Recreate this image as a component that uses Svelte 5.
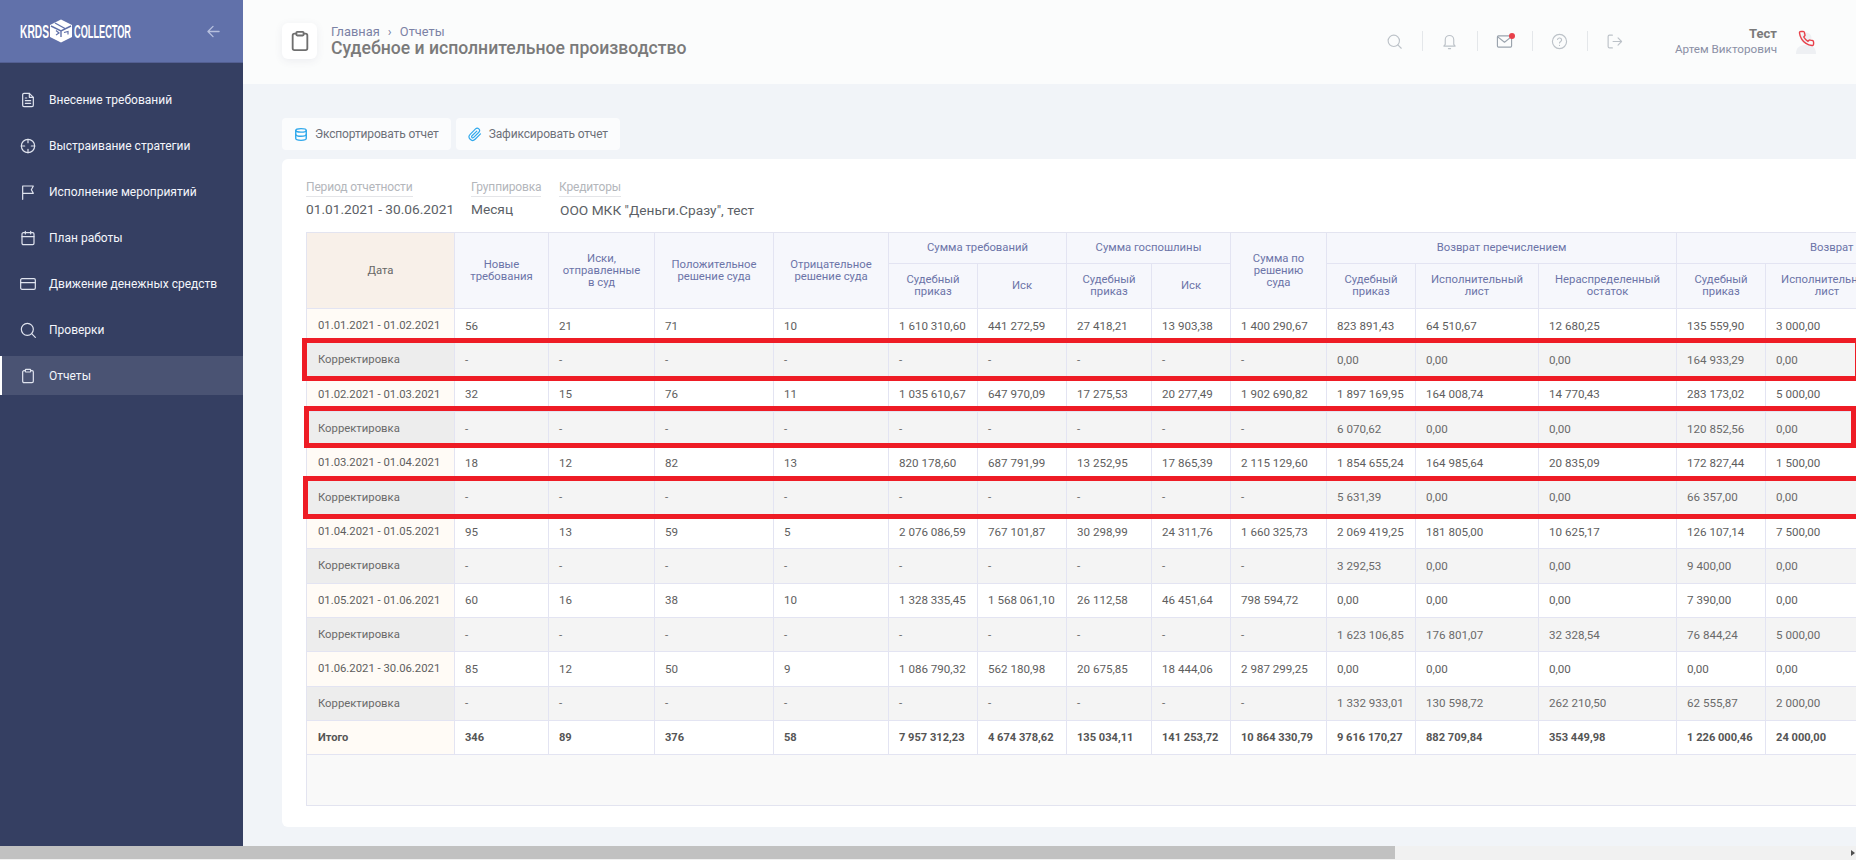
<script lang="ts">
  const nav = [
    { label: 'Внесение требований', icon: 'doc' },
    { label: 'Выстраивание стратегии', icon: 'target' },
    { label: 'Исполнение мероприятий', icon: 'flag' },
    { label: 'План работы', icon: 'calendar' },
    { label: 'Движение денежных средств', icon: 'card' },
    { label: 'Проверки', icon: 'search' },
    { label: 'Отчеты', icon: 'clipboard', active: true }
  ];

  const dash = ['-', '-', '-', '-', '-', '-', '-', '-', '-'];

  const rows = [
    { date: '01.01.2021 - 01.02.2021', cells: ['56', '21', '71', '10', '1 610 310,60', '441 272,59', '27 418,21', '13 903,38', '1 400 290,67', '823 891,43', '64 510,67', '12 680,25', '135 559,90', '3 000,00'] },
    { fix: true, date: 'Корректировка', cells: [...dash, '0,00', '0,00', '0,00', '164 933,29', '0,00'] },
    { date: '01.02.2021 - 01.03.2021', cells: ['32', '15', '76', '11', '1 035 610,67', '647 970,09', '17 275,53', '20 277,49', '1 902 690,82', '1 897 169,95', '164 008,74', '14 770,43', '283 173,02', '5 000,00'] },
    { fix: true, date: 'Корректировка', cells: [...dash, '6 070,62', '0,00', '0,00', '120 852,56', '0,00'] },
    { date: '01.03.2021 - 01.04.2021', cells: ['18', '12', '82', '13', '820 178,60', '687 791,99', '13 252,95', '17 865,39', '2 115 129,60', '1 854 655,24', '164 985,64', '20 835,09', '172 827,44', '1 500,00'] },
    { fix: true, date: 'Корректировка', cells: [...dash, '5 631,39', '0,00', '0,00', '66 357,00', '0,00'] },
    { date: '01.04.2021 - 01.05.2021', cells: ['95', '13', '59', '5', '2 076 086,59', '767 101,87', '30 298,99', '24 311,76', '1 660 325,73', '2 069 419,25', '181 805,00', '10 625,17', '126 107,14', '7 500,00'] },
    { fix: true, date: 'Корректировка', cells: [...dash, '3 292,53', '0,00', '0,00', '9 400,00', '0,00'] },
    { date: '01.05.2021 - 01.06.2021', cells: ['60', '16', '38', '10', '1 328 335,45', '1 568 061,10', '26 112,58', '46 451,64', '798 594,72', '0,00', '0,00', '0,00', '7 390,00', '0,00'] },
    { fix: true, date: 'Корректировка', cells: [...dash, '1 623 106,85', '176 801,07', '32 328,54', '76 844,24', '5 000,00'] },
    { date: '01.06.2021 - 30.06.2021', cells: ['85', '12', '50', '9', '1 086 790,32', '562 180,98', '20 675,85', '18 444,06', '2 987 299,25', '0,00', '0,00', '0,00', '0,00', '0,00'] },
    { fix: true, date: 'Корректировка', cells: [...dash, '1 332 933,01', '130 598,72', '262 210,50', '62 555,87', '2 000,00'] },
    { total: true, date: 'Итого', cells: ['346', '89', '376', '58', '7 957 312,23', '4 674 378,62', '135 034,11', '141 253,72', '10 864 330,79', '9 616 170,27', '882 709,84', '353 449,98', '1 226 000,46', '24 000,00'] }
  ];

  const widths = [148, 94, 106, 119, 115, 89, 89, 85, 79, 96, 89, 123, 138, 89, 123];
</script>

{#snippet navIcon(name)}
  <svg class="nav-icon" viewBox="0 0 24 24" fill="none" stroke="currentColor" stroke-width="1.8" stroke-linecap="round" stroke-linejoin="round">
    {#if name === 'doc'}
      <path d="M14 2H6a2 2 0 0 0-2 2v16a2 2 0 0 0 2 2h12a2 2 0 0 0 2-2V8z" /><path d="M14 2v6h6" /><path d="M8 13h8M8 17h8M8 9h2" />
    {:else if name === 'target'}
      <circle cx="12" cy="12" r="10" /><path d="M12 2v5M12 17v5M2 12h5M17 12h5" />
    {:else if name === 'flag'}
      <path d="M4 23V3h16l-3 5.500 3 5.500H4" />
    {:else if name === 'calendar'}
      <rect x="3" y="4" width="18" height="18" rx="2" /><path d="M16 2v4M8 2v4M3 10h18" />
    {:else if name === 'card'}
      <rect x="1" y="4" width="22" height="16" rx="2" /><path d="M1 10h22" />
    {:else if name === 'search'}
      <circle cx="11" cy="11" r="9" /><path d="M23 23l-5.500-5.500" />
    {:else}
      <path d="M16 4h2a2 2 0 0 1 2 2v14a2 2 0 0 1-2 2H6a2 2 0 0 1-2-2V6a2 2 0 0 1 2-2h2" /><rect x="8" y="2" width="8" height="4" rx="1" />
    {/if}
  </svg>
{/snippet}

<div class="app">
  <div class="shell">
    <aside class="sidebar">
      <div class="brand">
        <svg class="logo" viewBox="0 0 112 24" aria-label="KRDS COLLECTOR">
          <text x="0" y="18.5" textLength="29" lengthAdjust="spacingAndGlyphs">KRDS</text>
          <path d="M41 .5l11 5.500v12l-11 5.500-11-5.500V6z" fill="#fff" />
          <path d="M31 7l10 5 10-5M41 12v6M35 4l10 5.500" fill="none" stroke="#6171aa" stroke-width="1.400" />
          <path d="M36 11.500l3 2.500-3 2M44 13.500l4-1v3" fill="none" stroke="#6171aa" stroke-width="1.200" />
          <text x="54" y="18.5" textLength="57" lengthAdjust="spacingAndGlyphs">COLLECTOR</text>
        </svg>
        <svg class="collapse" viewBox="0 0 14 14" fill="none" stroke="currentColor" stroke-width="1.400" stroke-linecap="round" stroke-linejoin="round">
          <path d="M13 7H1.500M6.500 1.500L1 7l5.500 5.500" />
        </svg>
      </div>
      <nav class="nav">
        {#each nav as item}
          <div class="nav-item" class:active={item.active}>
            {@render navIcon(item.icon)}
            <span>{item.label}</span>
          </div>
        {/each}
      </nav>
    </aside>

    <div class="content">
      <header class="topbar">
        <div class="page-icon">
          <svg viewBox="0 0 24 24" fill="none" stroke="#6f6f6f" stroke-width="2" stroke-linecap="round" stroke-linejoin="round">
            <path d="M16 4h2a2 2 0 0 1 2 2v14a2 2 0 0 1-2 2H6a2 2 0 0 1-2-2V6a2 2 0 0 1 2-2h2" /><rect x="8" y="2" width="8" height="4" rx="1" />
          </svg>
        </div>
        <div class="titles">
          <div class="crumbs">Главная <i>›</i> Отчеты</div>
          <h1>Судебное и исполнительное производство</h1>
        </div>
        <div class="tools">
          <button class="tool" aria-label="Поиск">
            <svg viewBox="0 0 24 24"><circle cx="11" cy="11" r="8" /><path d="M21.500 21.500l-4.800-4.800" /></svg>
          </button>
          <button class="tool" aria-label="Уведомления">
            <svg viewBox="0 0 24 24"><path d="M18 16V9.500a6 6 0 0 0-12 0V16l-2 2.500h16z" /><path d="M10.500 22h3" /></svg>
          </button>
          <button class="tool mail" aria-label="Почта">
            <svg viewBox="0 0 24 24"><rect x="2" y="4" width="20" height="16" rx="1.500" /><path d="M2.500 5.500L12 13l9.500-7.500" /></svg>
            <span class="dot"></span>
          </button>
          <button class="tool" aria-label="Помощь">
            <svg viewBox="0 0 24 24"><circle cx="12" cy="12" r="10" /><path d="M9.200 9a3 3 0 0 1 5.800 1c0 2-3 2.500-3 4" /><path d="M12 17.500v.2" /></svg>
          </button>
          <button class="tool" aria-label="Выход">
            <svg viewBox="0 0 24 24"><path d="M9 21H5a2 2 0 0 1-2-2V5a2 2 0 0 1 2-2h4" /><path d="M10 12h12M17 7l5 5-5 5" /></svg>
          </button>
        </div>
        <div class="user">
          <strong>Тест</strong>
          <span>Артем Викторович</span>
        </div>
        <div class="avatar">
          <svg class="ghost" viewBox="0 0 20 22" fill="#eef0f3"><circle cx="10" cy="6" r="5.500" /><path d="M0 22c0-7 4-9 10-9s10 2 10 9z" /></svg>
          <svg class="phone" viewBox="0 0 24 24" fill="none" stroke="#e8404a" stroke-width="2" stroke-linecap="round" stroke-linejoin="round">
            <path d="M22 16.900v3a2 2 0 0 1-2.200 2 19.800 19.800 0 0 1-8.600-3.100 19.500 19.500 0 0 1-6-6 19.800 19.800 0 0 1-3.100-8.700A2 2 0 0 1 4.100 2h3a2 2 0 0 1 2 1.700c.1 1 .4 1.900.7 2.800a2 2 0 0 1-.5 2.100L8.100 9.900a16 16 0 0 0 6 6l1.300-1.300a2 2 0 0 1 2.100-.4c.9.300 1.800.6 2.800.7a2 2 0 0 1 1.700 2z" />
          </svg>
        </div>
      </header>

      <main class="page">
        <div class="actions">
          <button class="action">
            <svg viewBox="0 0 24 24" fill="none" stroke="#2fa8ec" stroke-width="2.400" stroke-linecap="round" stroke-linejoin="round">
              <ellipse cx="12" cy="5" rx="9" ry="3" /><path d="M21 12c0 1.700-4 3-9 3s-9-1.300-9-3" /><path d="M3 5v14c0 1.700 4 3 9 3s9-1.300 9-3V5" />
            </svg>
            Экспортировать отчет
          </button>
          <button class="action">
            <svg viewBox="0 0 24 24" fill="none" stroke="#2fa8ec" stroke-width="2" stroke-linecap="round" stroke-linejoin="round">
              <path d="M21.400 11l-9.200 9.200a6 6 0 0 1-8.500-8.500l9.200-9.200a4 4 0 0 1 5.700 5.700l-9.200 9.200a2 2 0 0 1-2.800-2.800l8.500-8.500" />
            </svg>
            Зафиксировать отчет
          </button>
        </div>

        <section class="card">
          <div class="filters">
            <div class="filter period"><label>Период отчетности</label><span>01.01.2021 - 30.06.2021</span></div>
            <div class="filter group"><label>Группировка</label><span>Месяц</span></div>
            <div class="filter lenders"><label>Кредиторы</label><span>ООО МКК "Деньги.Сразу", тест</span></div>
          </div>

          <div class="table-box">
            <table>
              <colgroup>
                {#each widths as w}<col style:width="{w}px" />{/each}
              </colgroup>
              <thead>
                <tr class="head-top">
                  <th rowspan="2" class="date-head">Дата</th>
                  <th rowspan="2">Новые<br />требования</th>
                  <th rowspan="2">Иски,<br />отправленные<br />в суд</th>
                  <th rowspan="2">Положительное<br />решение суда</th>
                  <th rowspan="2">Отрицательное<br />решение суда</th>
                  <th colspan="2">Сумма требований</th>
                  <th colspan="2">Сумма госпошлины</th>
                  <th rowspan="2">Сумма по<br />решению<br />суда</th>
                  <th colspan="3">Возврат перечислением</th>
                  <th colspan="2" class="cut">Возврат</th>
                </tr>
                <tr class="head-sub">
                  <th>Судебный<br />приказ</th>
                  <th>Иск</th>
                  <th>Судебный<br />приказ</th>
                  <th>Иск</th>
                  <th>Судебный<br />приказ</th>
                  <th>Исполнительный<br />лист</th>
                  <th>Нераспределенный<br />остаток</th>
                  <th>Судебный<br />приказ</th>
                  <th>Исполнительный<br />лист</th>
                </tr>
              </thead>
              <tbody>
                {#each rows as row}
                  <tr class:fix={row.fix} class:total={row.total}>
                    <td class="date">{row.date}</td>
                    {#each row.cells as cell}<td>{cell}</td>{/each}
                  </tr>
                {/each}
              </tbody>
            </table>
          </div>
        </section>
      </main>
    </div>
  </div>

  <div class="hscroll">
    <div class="thumb"></div>
    <div class="arrow"></div>
  </div>

  <!-- red marks drawn over the screenshot -->
  <div class="mark mark-1"></div>
  <div class="mark mark-2"></div>
  <div class="mark mark-3"></div>
</div>

<style>
  :global(body) {
    font-family: Roboto, "Noto Sans", sans-serif;
    color: #5f5f5f;
  }

  .app {
    position: relative;
    height: 100vh;
    display: flex;
    flex-direction: column;
    overflow: hidden;
    background: #f1f4f8;
  }

  .shell {
    flex: 1;
    min-height: 0;
    display: flex;
  }

  .sidebar {
    width: 243px;
    flex: none;
    background: #353f62;
  }

  .brand {
    height: 63px;
    display: flex;
    align-items: center;
    justify-content: space-between;
    padding: 0 20px;
    background: #6171aa;
    box-sizing: border-box;
    border-bottom: 1px solid #535f92;
  }

  .logo {
    width: 112px;
    height: 24px;
    overflow: visible;
  }

  .logo text {
    font-family: "Liberation Sans", sans-serif;
    font-weight: 700;
    font-size: 18px;
    fill: #fff;
  }

  .collapse {
    width: 13px;
    height: 13px;
    color: #b7c0de;
    margin-right: 3px;
  }

  .nav {
    padding-top: 17px;
  }

  .nav-item {
    height: 39px;
    margin-bottom: 7px;
    display: flex;
    align-items: center;
    gap: 13px;
    padding-left: 20px;
    box-sizing: border-box;
    color: #f4f6fb;
    font-size: 12px;
  }

  .nav-item.active {
    background: #4a5373;
    border-left: 2px solid #fff;
    padding-left: 18px;
  }

  .nav-icon {
    width: 16px;
    height: 16px;
    flex: none;
    color: #dfe3ee;
  }

  .content {
    flex: 1;
    min-width: 0;
    overflow: hidden;
  }

  .topbar {
    height: 84px;
    display: flex;
    align-items: center;
    padding-left: 39px;
    background: #fbfcfc;
    box-sizing: border-box;
  }

  .page-icon {
    width: 35px;
    height: 36px;
    margin-top: -2px;
    display: flex;
    align-items: center;
    justify-content: center;
    background: #fff;
    border-radius: 6px;
    box-shadow: 0 2px 8px rgba(60, 70, 100, 0.08);
  }

  .page-icon svg {
    width: 22px;
    height: 22px;
  }

  .titles {
    margin-left: 14px;
    margin-top: -3px;
  }

  .crumbs {
    font-size: 12.800px;
    line-height: 15px;
    color: #7b82a5;
  }

  .crumbs i {
    font-style: normal;
    margin: 0 5px;
  }

  h1 {
    margin: 0;
    font-size: 17.600px;
    line-height: 18px;
    font-weight: 500;
    color: #7a7a7a;
  }

  .tools {
    margin-left: auto;
    display: flex;
    align-items: center;
    margin-top: -2px;
  }

  .tool {
    position: relative;
    width: 55px;
    height: 20px;
    padding: 0;
    display: flex;
    align-items: center;
    justify-content: center;
    background: none;
    border: 0;
    border-left: 1px solid #e4e7ea;
  }

  .tool:first-child {
    border-left: 0;
  }

  .tool svg {
    width: 17px;
    height: 17px;
    fill: none;
    stroke: #bcc2c8;
    stroke-width: 1.600;
    stroke-linecap: round;
    stroke-linejoin: round;
  }

  .tool.mail svg {
    stroke: #9aa3ad;
  }

  .dot {
    position: absolute;
    top: 2px;
    left: 31px;
    width: 6px;
    height: 6px;
    border-radius: 50%;
    background: #e8404a;
  }

  .user {
    margin-left: 33px;
    display: flex;
    flex-direction: column;
    align-items: flex-end;
    margin-top: -1px;
  }

  .user strong {
    font-size: 13px;
    line-height: 15px;
    font-weight: 700;
    color: #7a7a7a;
  }

  .user span {
    font-size: 11.700px;
    line-height: 16px;
    color: #8a8fa5;
  }

  .avatar {
    position: relative;
    width: 20px;
    height: 24px;
    margin-left: 19px;
    margin-right: 40px;
  }

  .ghost {
    position: absolute;
    left: 0;
    top: 2px;
    width: 20px;
    height: 22px;
  }

  .phone {
    position: absolute;
    left: 2px;
    top: 0;
    width: 17px;
    height: 17px;
  }

  .page {
    padding: 34px 0 0 39px;
  }

  .actions {
    display: flex;
    gap: 5px;
    margin-bottom: 9px;
  }

  .action {
    height: 32px;
    display: flex;
    align-items: center;
    gap: 7px;
    padding: 0 12px;
    background: #fbfcfd;
    border: 0;
    border-radius: 4px;
    font-family: inherit;
    font-size: 12px;
    letter-spacing: -0.15px;
    color: #6d7079;
    white-space: nowrap;
  }

  .action svg {
    width: 14px;
    height: 15px;
  }

  .card {
    width: 1700px;
    height: 668px;
    box-sizing: border-box;
    padding: 19px 0 0 24px;
    background: #fff;
    border-radius: 6px;
  }

  .filters {
    height: 54px;
    display: flex;
  }

  .filter {
    display: flex;
    flex-direction: column;
    align-items: flex-start;
  }

  .filter label {
    font-size: 12px;
    letter-spacing: -0.15px;
    line-height: 18px;
    color: #b3b6bb;
    border-bottom: 1px solid #e4e5e8;
  }

  .filter span {
    margin-top: 3px;
    font-size: 13.700px;
    line-height: 18px;
    color: #5c5f66;
    white-space: nowrap;
  }

  .period {
    width: 165px;
  }

  .group {
    width: 88px;
  }

  .lenders span {
    margin-left: 1px;
    margin-top: 4px;
  }

  .table-box {
    height: 574px;
    box-sizing: border-box;
    background: #f9f9f9;
    border: 1px solid #e3e4f0;
  }

  table {
    width: 1582px;
    table-layout: fixed;
    border-collapse: separate;
    border-spacing: 0;
    font-size: 11.600px;
  }

  th,
  td {
    border-right: 1px solid #e3e4f2;
    border-bottom: 1px solid #e3e4f2;
    box-sizing: border-box;
    white-space: nowrap;
    overflow: hidden;
  }

  th {
    padding: 0;
    background: #f6f7fc;
    font-size: 11.300px;
    font-weight: 400;
    line-height: 12px;
    color: #6c74a8;
    text-align: center;
  }

  .head-top {
    height: 31px;
  }

  .head-sub {
    height: 45px;
  }

  th.date-head {
    background: #f8f0e9;
    color: #666;
  }

  th.cut {
    text-align: left;
    padding-left: 133px;
  }

  td {
    height: 34.340px;
    padding: 0 0 0 10px;
    background: #fff;
    color: #5e5e5e;
  }

  td.date {
    padding-left: 11px;
    font-size: 11.300px;
    background: #fffbf6;
  }

  .fix td {
    background: #f4f4f4;
    color: #6a6a6a;
  }

  .fix td.date {
    background: #ededed;
  }

  .total td {
    font-size: 11.100px;
    font-weight: 700;
    color: #555;
  }

  .hscroll {
    position: relative;
    height: 14px;
    flex: none;
    background: #f1f1f1;
  }

  .thumb {
    width: 1395px;
    height: 13px;
    background: #c1c1c1;
  }

  .arrow {
    position: absolute;
    right: 1px;
    top: 4px;
    border-left: 4px solid #505050;
    border-top: 3.500px solid transparent;
    border-bottom: 3.500px solid transparent;
  }

  .mark {
    position: absolute;
    border: 5px solid #ee1c25;
    box-sizing: border-box;
  }

  .mark-1 {
    left: 302px;
    top: 338px;
    width: 1558px;
    height: 43px;
  }

  .mark-2 {
    left: 304px;
    top: 406px;
    width: 1552px;
    height: 42px;
  }

  .mark-3 {
    left: 303px;
    top: 476px;
    width: 1570px;
    height: 43px;
  }
</style>
